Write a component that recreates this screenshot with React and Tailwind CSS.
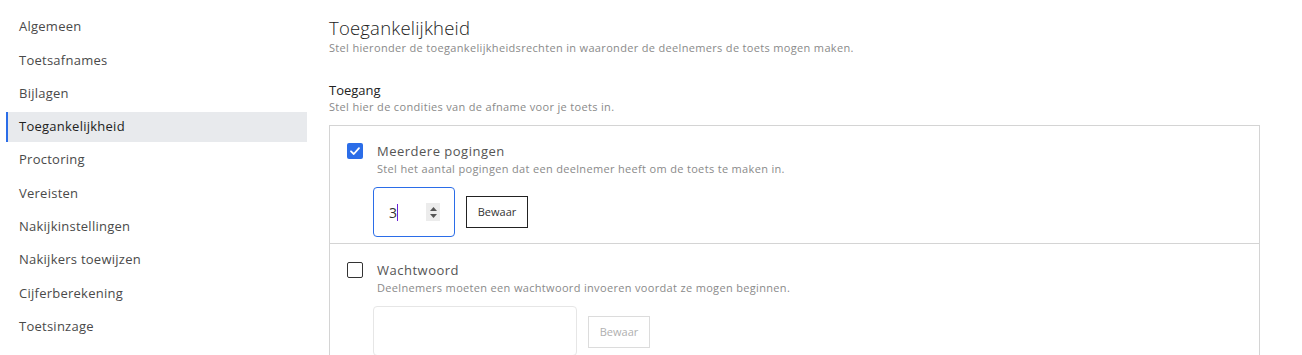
import React, { useState } from "react";

const menu = [
  "Algemeen",
  "Toetsafnames",
  "Bijlagen",
  "Toegankelijkheid",
  "Proctoring",
  "Vereisten",
  "Nakijkinstellingen",
  "Nakijkers toewijzen",
  "Cijferberekening",
  "Toetsinzage",
];

const Check = ({ checked }) =>
  checked ? (
    <div className="w-4 h-4 rounded-[2px] bg-[#2b6de8] flex items-center justify-center shrink-0">
      <svg width="12" height="12" viewBox="0 0 12 12" fill="none">
        <path d="M2 6.3 L4.8 9 L10 3.2" stroke="white" strokeWidth="1.8" strokeLinecap="round" strokeLinejoin="round" />
      </svg>
    </div>
  ) : (
    <div className="w-4 h-4 rounded-[2px] border border-[#333] bg-white shrink-0" />
  );

const App = () => {
  const [active] = useState("Toegankelijkheid");
  return (
    <div className="w-[1302px] h-[355px] overflow-hidden bg-white flex font-['Open_Sans',sans-serif]">
      {/* sidebar */}
      <div className="w-[329px] shrink-0 pt-[12px] pl-[6px] flex flex-col gap-[3.3px]">
        {menu.map((m) => (
          <div
            key={m}
            className={
              m === active
                ? "h-[30px] w-[301px] flex items-center border-l-2 border-[#2b6de8] pl-[11px] text-[13px] tracking-[0.25px] text-[#222] bg-[#e8eaed]"
                : "h-[30px] w-[301px] flex items-center pl-[13px] text-[13px] tracking-[0.25px] text-[#4a4a4a]"
            }
          >
            {m}
          </div>
        ))}
      </div>

      {/* main */}
      <div className="flex-1 pt-[16px]">
        <h1 className="text-[18.5px] font-light text-[#222] leading-[24px] tracking-[0.2px]">Toegankelijkheid</h1>
        <p className="text-[11px] text-[#8a8a8a] leading-[16px] tracking-[0.33px]">
          Stel hieronder de toegankelijkheidsrechten in waaronder de deelnemers de toets mogen maken.
        </p>

        <h2 className="mt-[25px] text-[13px] text-[#222] leading-[18px]">Toegang</h2>
        <p className="text-[11px] text-[#8a8a8a] leading-[16px] tracking-[0.33px]">Stel hier de condities van de afname voor je toets in.</p>

        <div className="mt-[10px] w-[931px] border border-[#d4d4d4]">
          <div className="flex gap-[14px] pl-[17px] pt-[17px] pb-[6px] border-b border-[#d4d4d4]">
            <Check checked />
            <div>
              <div className="text-[13px] text-[#555] leading-[17px] tracking-[0.5px]">Meerdere pogingen</div>
              <div className="mt-[1px] text-[11px] text-[#8a8a8a] leading-[16px] tracking-[0.33px]">
                Stel het aantal pogingen dat een deelnemer heeft om de toets te maken in.
              </div>
              <div className="mt-[10px] -ml-[4px] flex items-center gap-[11px]">
                <div className="w-[82px] h-[50px] border border-[#2b6de8] rounded-[4px] flex items-center pl-[15px] pr-[14px]">
                  <span className="text-[14px] text-[#333]">3</span>
                  <span className="w-[1px] h-[17px] bg-[#6b21d8]" />
                  <div className="ml-auto w-[14px] h-[18px] bg-[#ececec] flex flex-col items-center justify-center gap-[3px]">
                    <svg width="7" height="4" viewBox="0 0 7 4"><path d="M0 4 L3.5 0 L7 4 Z" fill="#555" /></svg>
                    <svg width="7" height="4" viewBox="0 0 7 4"><path d="M0 0 L3.5 4 L7 0 Z" fill="#555" /></svg>
                  </div>
                </div>
                <button className="w-[62px] h-[32px] border border-[#222] text-[11px] text-[#333] bg-white">Bewaar</button>
              </div>
            </div>
          </div>

          <div className="flex gap-[14px] pl-[17px] pt-[18px] pb-[20px]">
            <Check />
            <div>
              <div className="text-[13px] text-[#555] leading-[17px] tracking-[0.5px]">Wachtwoord</div>
              <div className="mt-[1px] text-[11px] text-[#8a8a8a] leading-[16px] tracking-[0.33px]">
                Deelnemers moeten een wachtwoord invoeren voordat ze mogen beginnen.
              </div>
              <div className="mt-[10px] -ml-[4px] flex items-start gap-[11px]">
                <div className="w-[204px] h-[50px] border border-[#e6e6e6] rounded-[4px]" />
                <button className="mt-[10px] w-[62px] h-[32px] border border-[#dcdcdc] text-[11px] text-[#b0b0b0] bg-white">Bewaar</button>
              </div>
            </div>
          </div>
        </div>
      </div>
    </div>
  );
};

export default App;
